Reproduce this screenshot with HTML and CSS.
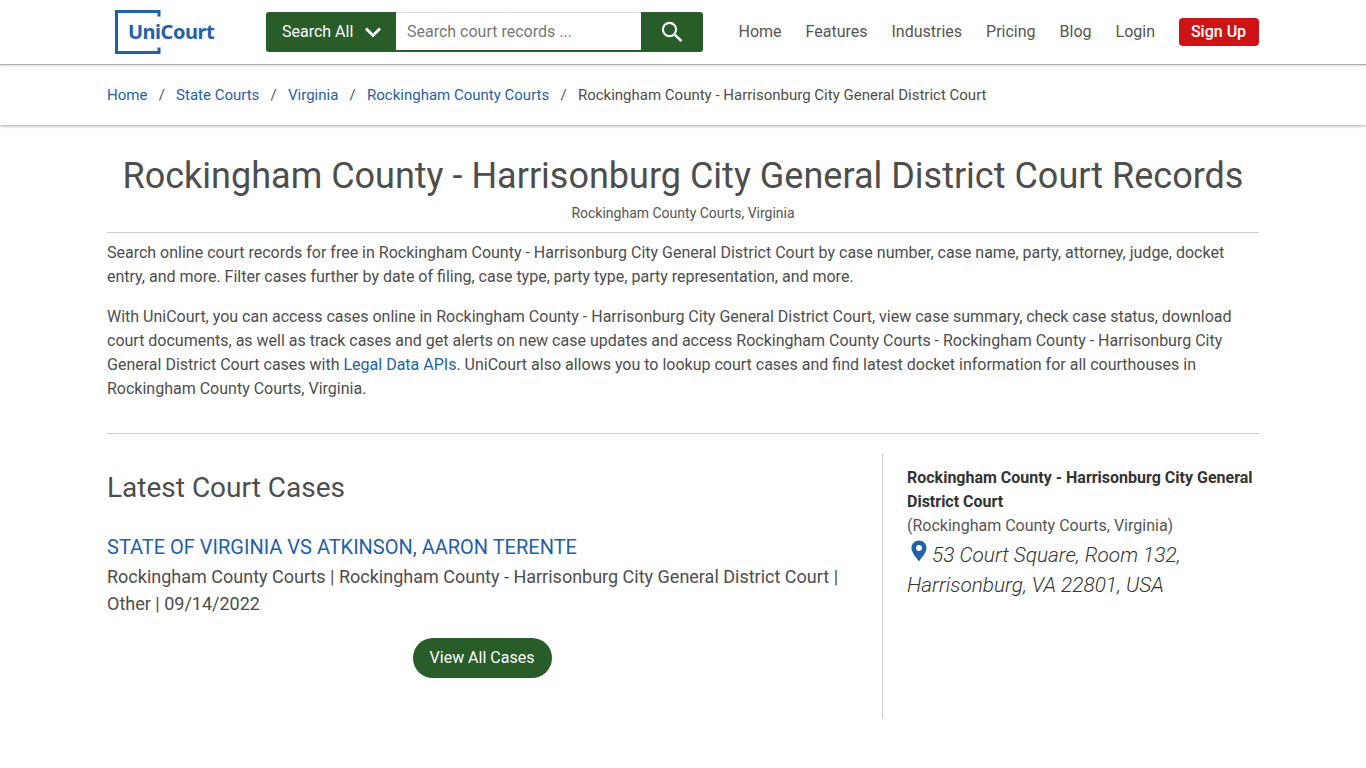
FILE: index.html
```html
<!DOCTYPE html>
<html lang="en">
<head>
<meta charset="utf-8">
<title>Rockingham County - Harrisonburg City General District Court Records</title>
<link rel="stylesheet" href="styles.css">
</head>
<body>
<header class="topbar">
  <a class="logo" href="#">
    <svg class="logo-frame" width="46" height="44" viewBox="0 0 46 44" aria-hidden="true">
      <path d="M44 6.500V1.500H1.500V42.500H44V37.500" fill="none" stroke="#1f62a8" stroke-width="3"/>
    </svg>
    <span class="logo-text">UniCourt</span>
  </a>
  <form class="search">
    <button type="button" class="search-all">Search All
      <svg width="18" height="12" viewBox="0 0 18 12" aria-hidden="true"><path d="M2 2.500l7 7 7-7" fill="none" stroke="#fff" stroke-width="2.800"/></svg>
    </button>
    <div class="search-input">Search court records ...</div>
    <button type="button" class="search-go" aria-label="Search">
      <svg width="24" height="24" viewBox="0 0 24 24" aria-hidden="true"><circle cx="9.500" cy="9.500" r="6.600" fill="none" stroke="#fff" stroke-width="2.200"/><path d="M14.500 14.500l7 6.600" fill="none" stroke="#fff" stroke-width="2.600"/></svg>
    </button>
  </form>
  <nav class="nav">
    <a href="#">Home</a><a href="#">Features</a><a href="#">Industries</a><a href="#">Pricing</a><a href="#">Blog</a><a href="#">Login</a>
    <a class="signup" href="#">Sign Up</a>
  </nav>
</header>
<div class="crumbbar">
  <ol class="crumbs">
    <li><a href="#">Home</a></li>
    <li><a href="#">State Courts</a></li>
    <li><a href="#">Virginia</a></li>
    <li><a href="#">Rockingham County Courts</a></li>
    <li>Rockingham County - Harrisonburg City General District Court</li>
  </ol>
</div>
<main class="container">
  <h1>Rockingham County - Harrisonburg City General District Court Records</h1>
  <p class="subtitle">Rockingham County Courts, Virginia</p>
  <section class="intro">
    <p>Search online court records for free in Rockingham County - Harrisonburg City General District Court by case number, case name, party, attorney, judge, docket entry, and more. Filter cases further by date of filing, case type, party type, party representation, and more.</p>
    <p>With UniCourt, you can access cases online in Rockingham County - Harrisonburg City General District Court, view case summary, check case status, download court documents, as well as track cases and get alerts on new case updates and access Rockingham County Courts - Rockingham County - Harrisonburg City General District Court cases with <a href="#">Legal Data APIs</a>. UniCourt also allows you to lookup court cases and find latest docket information for all courthouses in Rockingham County Courts, Virginia.</p>
  </section>
  <div class="columns">
    <section class="cases">
      <h2>Latest Court Cases</h2>
      <a class="case-title" href="#">STATE OF VIRGINIA VS ATKINSON, AARON TERENTE</a>
      <p class="case-meta">Rockingham County Courts | Rockingham County - Harrisonburg City General District Court | Other | 09/14/2022</p>
      <div class="view-all-row"><a class="view-all" href="#">View All Cases</a></div>
    </section>
    <aside class="side">
      <strong>Rockingham County - Harrisonburg City General District Court</strong>
      <div>(Rockingham County Courts, Virginia)</div>
      <address><svg class="pin" width="16" height="22" viewBox="0 0 16 22" aria-hidden="true"><path fill-rule="evenodd" d="M8 0.500C3.700 0.500 0.500 3.800 0.500 8c0 4.800 5.200 9.800 7.500 13.500C10.300 17.800 15.500 12.800 15.500 8 15.500 3.800 12.300 0.500 8 0.500ZM8 5a3 3 0 1 1 0 6 3 3 0 0 1 0-6Z" fill="#1f62a8"/></svg> 53 Court Square, Room 132, Harrisonburg, VA 22801, USA</address>
    </aside>
  </div>
</main>
</body>
</html>
```
FILE: styles.css
```css
* { box-sizing: border-box; }
html, body { margin: 0; padding: 0; background: #fff; }
body { font-family: Roboto, "Liberation Sans", sans-serif; font-size: 16px; line-height: 24px; color: #4d4d4d; height: 768px; overflow: hidden; }
a { color: #1f5fa9; text-decoration: none; }
p { margin: 0; }

.topbar { position: relative; z-index: 1; height: 65px; border-bottom: 1px solid #aaa; box-shadow: 0 1px 2px rgba(0,0,0,.15); display: flex; align-items: flex-start; padding-left: 115px; background: #fff; }
.logo { position: relative; display: block; width: 151px; height: 44px; margin-top: 10px; flex: none; }
.logo-frame { display: block; }
.logo-text { position: absolute; left: 13px; top: 9px; font-family: "Noto Sans", sans-serif; font-weight: 700; font-size: 20px; line-height: 26px; letter-spacing: -0.5px; color: #1f62a8; }

.search { display: flex; width: 437px; height: 40px; margin-top: 12px; flex: none; }
.search-all { width: 130px; height: 40px; border: 0; padding: 0 0 0 16px; background: #285c28; color: #fff; font: 400 16px/24px Roboto, sans-serif; border-radius: 3px 0 0 3px; display: flex; align-items: center; gap: 11px; }
.search-input { width: 245px; height: 40px; border-top: 1px solid #ddd; border-bottom: 2px solid #285c28; padding: 0 0 0 11px; color: #777; line-height: 37px; }
.search-go { width: 62px; height: 40px; border: 0; padding: 0; background: #285c28; border-radius: 0 3px 3px 0; display: flex; align-items: center; justify-content: center; }

.nav { display: flex; align-items: center; height: 38px; margin: 13px 0 0 35.5px; }
.nav a { color: #555; margin-right: 24px; }
.nav .signup { margin: 0 0 0 -0.5px; width: 80px; height: 28px; line-height: 28px; text-align: center; background: #cc1417; color: #fff; border-radius: 4px; font-weight: 500; }

.crumbbar { height: 60px; padding: 0 107px; box-shadow: 0 1px 3px rgba(0,0,0,.35); display: flex; align-items: center; }
.crumbs { list-style: none; margin: 0; padding: 0; display: flex; font-size: 15px; line-height: 22px; color: #4d4d4d; }
.crumbs li + li::before { content: "/"; margin: 0 11.25px; color: #555; }

.container { width: 1152px; margin: 0 auto; }
h1 { margin: 30px 0 0; font-size: 36px; font-weight: 400; line-height: 42px; text-align: center; color: #4d4d4d; }
.subtitle { margin-top: 6px; font-size: 14px; line-height: 21px; text-align: center; color: #555; padding-bottom: 8px; border-bottom: 1px solid #ccc; }
.intro { padding: 8px 0 32px; border-bottom: 1px solid #ccc; }
.intro p + p { margin-top: 16px; }

.columns { display: flex; margin-top: 20px; height: 264px; }
.cases { width: 776px; padding-right: 25px; border-right: 1px solid #ccc; flex: none; }
h2 { margin: 15px 0 0; font-size: 28px; font-weight: 400; line-height: 38px; color: #4d4d4d; }
.case-title { display: block; margin-top: 26px; font-size: 20px; line-height: 28px; }
.case-meta { margin-top: 2px; font-size: 18px; line-height: 27px; }
.view-all-row { display: flex; justify-content: center; margin-top: 21px; }
.view-all { display: block; width: 139px; height: 40px; line-height: 39px; border-radius: 20px; background: #285c28; color: #fff; text-align: center; }

.side { padding: 12px 0 0 24px; flex: 1; color: #555; }
.side strong { display: block; font-weight: 700; color: #333; }
address { margin-top: 2px; font-size: 20.8px; line-height: 30px; font-style: italic; font-weight: 300; color: #333; }
.pin { vertical-align: 0; margin-left: 4px; }
```
